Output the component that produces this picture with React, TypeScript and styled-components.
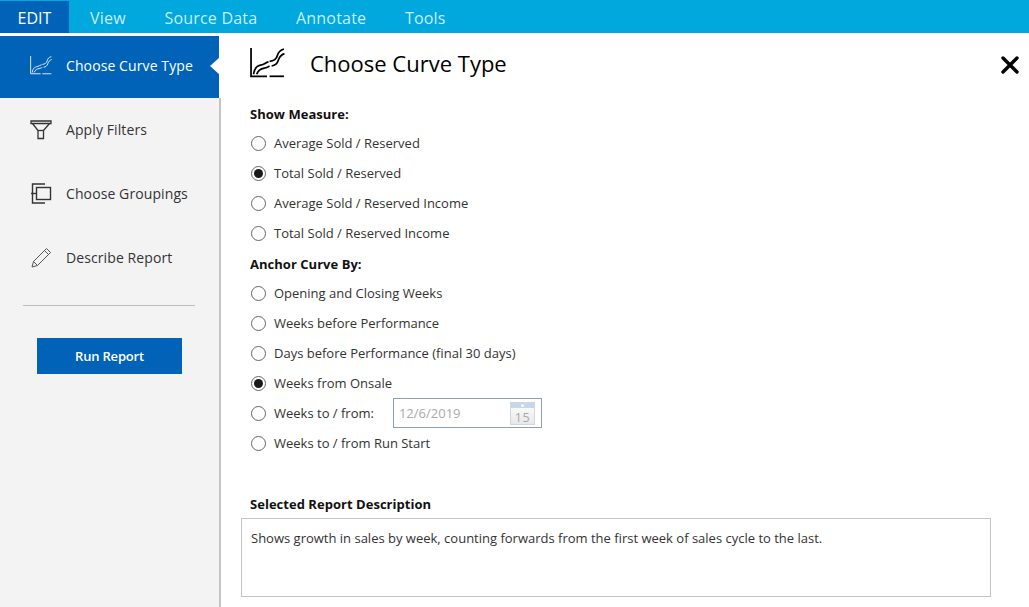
import React from "react";
import styled, { createGlobalStyle } from "styled-components";

const Global = createGlobalStyle`
  html, body { margin: 0; padding: 0; background: #fff; }
  body { font-family: "Open Sans", "Noto Sans", sans-serif; overflow: hidden; }
`;
const Page = styled.div`
  width: 1029px; height: 607px; display: flex; flex-direction: column; overflow: hidden; background: #fff;
`;
const TopBar = styled.nav`
  height: 32px; flex: none; display: flex; background: #00a8de; margin-bottom: 3px; padding-top: 1px; align-items: stretch;
`;
const EditTab = styled.div`
  width: 69px; display: flex; align-items: center; justify-content: center; font-size: 16px; letter-spacing: 0;
  color: #fff; background: #0063b8; padding-top: 1px; box-sizing: border-box;
`;
const TabList = styled.div`display: flex; align-items: center; gap: 38.7px; margin-left: 21px; padding-top: 2px;`;
const Tab = styled.div`font-size: 16px; letter-spacing: 0.2px; color: #c8eef9;`;
const Body = styled.div`flex: 1; display: flex; min-height: 0;`;
const Sidebar = styled.aside`
  width: 219px; flex: none; background: #f3f3f3; border-right: 2px solid #c4c4c4; display: flex; flex-direction: column;
`;
const NavItem = styled.div<{ $active?: boolean }>`
  height: 62px; margin-bottom: 2px; display: flex; align-items: center; padding: 0 0 3px 30px; gap: 14px; position: relative;
  font-size: 14px; letter-spacing: 0.1px; box-sizing: border-box;
  color: ${p => (p.$active ? "#fff" : "#333")};
  background: ${p => (p.$active ? "#0063b8" : "transparent")};
  ${p => p.$active && "width: 221px; border-right: 2px solid #fff;"}
`;
const Caret = styled.span`
  position: absolute; right: -1px; top: 21px; width: 0; height: 0;
  border-top: 9px solid transparent; border-bottom: 9px solid transparent; border-right: 10px solid #fff;
`;
const IconBox = styled.span`width: 22px; height: 22px; flex: none; display: flex; align-items: center; justify-content: center;`;
const Divider = styled.hr`margin: 13px 24px 0 23px; border: 0; border-top: 1px solid #bdbdbd; height: 0;`;
const RunButton = styled.button`
  margin: 32px 0 0 37px; width: 145px; height: 36px; border: 0; background: #0063b8; color: #fff;
  font: 600 13px "Open Sans", sans-serif; letter-spacing: -0.2px; padding: 0;
`;
const Main = styled.main`flex: 1; min-width: 0; padding: 12px 0 0 29px; position: relative; display: flex; flex-direction: column;`;
const Header = styled.header`display: flex; align-items: center; height: 30px; gap: 25px;`;
const Title = styled.h1`
  margin: 0; font-size: 22px; font-weight: 500; color: #000; letter-spacing: 0; line-height: 30px;
`;
const Close = styled.span`position: absolute; left: 779px; top: 19px; display: flex;`;
const Section = styled.div`
  font-size: 13px; font-weight: 700; color: #111; letter-spacing: 0.03px; line-height: 20px;
`;
const MeasureLabel = styled(Section)`margin-top: 26px;`;
const AnchorLabel = styled(Section)`margin-top: 6px;`;
const Options = styled.div`display: flex; flex-direction: column; margin-top: 4px;`;
const Option = styled.label`
  height: 30px; display: flex; align-items: center; gap: 8px; font-size: 13px; letter-spacing: 0; color: #333;
`;
const Radio = styled.span<{ $on?: boolean }>`
  width: 15px; height: 15px; flex: none; margin-left: 1px; border-radius: 50%; border: 1px solid #666; background: #fff; box-sizing: border-box;
  display: flex; align-items: center; justify-content: center;
  &::after { content: ""; width: 9px; height: 9px; border-radius: 50%; background: ${p => (p.$on ? "#1a1a1a" : "transparent")}; }
`;
const DateField = styled.span`
  margin-left: 11px; width: 149px; height: 30px; box-sizing: border-box; border: 1px solid #8a9fb0; display: flex; align-items: center;
  justify-content: space-between; padding: 0 6px 0 5px; color: #aaa; font-size: 13px; letter-spacing: 0;
`;
const DescLabel = styled(Section)`margin-top: 36px; margin-bottom: 4px;`;
const DescBox = styled.div`
  margin-left: -9px; width: 750px; height: 79px; box-sizing: border-box; border: 1px solid #c4c4c4; padding: 9px 9px;
  font-size: 13px; letter-spacing: 0; color: #333; line-height: 20px;
`;

const CurveIcon = ({ size, color, sw }: { size: number; color: string; sw: number }) => (
  <svg width={size} height={(size * 29) / 34} viewBox="0 0 34 29" fill="none" stroke={color} strokeWidth={sw}>
    <path d="M1 0v27.5H16.5" />
    <path d="M19 27.5h14" />
    <path d="M3.5 25.5C4.500 18 8 17 11 16.5s4-2.500 7-3" />
    <path d="M6.500 25.500C8 21 11 20 14 19.500s4-1.500 5-2" />
    <path d="M19 13c4-.5 6.500-1.500 7.500-5.500S29.500 2 33 1" />
    <path d="M21 17.500c3-.5 5.500-2 6.500-5.500S30.500 6.500 33.500 5.500" />
  </svg>
);
const FunnelIcon = () => (
  <svg width="22" height="20" viewBox="0 0 22 20" fill="none" stroke="#333" strokeWidth="1.300">
    <path d="M1 1h20v2.500H1z" />
    <path d="M2.500 3.500L8 10.500v8h5.500v-8L19.500 3.500" />
    <path d="M8 10.500h5.500" />
  </svg>
);
const GroupIcon = () => (
  <svg width="21" height="21" viewBox="0 0 21 21" fill="none" stroke="#333" strokeWidth="1.400">
    <path d="M14 1H1.500v19H14" />
    <path d="M0 10.500H5" />
    <rect x="5.500" y="4.500" width="14" height="12" />
  </svg>
);
const PencilIcon = () => (
  <svg width="21" height="21" viewBox="0 0 21 21" fill="none" stroke="#555" strokeWidth="1">
    <path d="M1 20l1.500-5.500L15.500 1.500l4 4L6.500 18.500z" />
    <path d="M2.500 14.500l4 4M13.500 3.500l4 4" />
  </svg>
);
const CalendarIcon = () => (
  <svg width="25" height="23" viewBox="0 0 25 23">
    <defs>
      <linearGradient id="calBody" x1="0" y1="0" x2="0" y2="1">
        <stop offset="0" stopColor="#fff" />
        <stop offset="1" stopColor="#e6e8e8" />
      </linearGradient>
    </defs>
    <rect x="0.500" y="0.500" width="24" height="22" fill="url(#calBody)" stroke="#d4d7d9" />
    <rect x="1" y="1" width="23" height="5" fill="#c3d8ea" />
    <circle cx="12.500" cy="3.500" r="1.600" fill="#fff" />
    <text x="12.500" y="19.500" textAnchor="middle" fontSize="12.500" letterSpacing="0.5" fill="#a9a9a9" fontFamily="Open Sans, sans-serif">15</text>
  </svg>
);

const measures = [
  ["Average Sold / Reserved", false],
  ["Total Sold / Reserved", true],
  ["Average Sold / Reserved Income", false],
  ["Total Sold / Reserved Income", false],
] as const;
const anchors = [
  ["Opening and Closing Weeks", false],
  ["Weeks before Performance", false],
  ["Days before Performance (final 30 days)", false],
  ["Weeks from Onsale", true],
] as const;

export default function App() {
  return (
    <Page>
      <Global />
      <TopBar>
        <EditTab>EDIT</EditTab>
        <TabList>
          <Tab>View</Tab>
          <Tab>Source Data</Tab>
          <Tab>Annotate</Tab>
          <Tab>Tools</Tab>
        </TabList>
      </TopBar>
      <Body>
        <Sidebar>
          <NavItem $active>
            <IconBox><CurveIcon size={22} color="#fff" sw={1.300} /></IconBox>
            Choose Curve Type
            <Caret />
          </NavItem>
          <NavItem><IconBox><FunnelIcon /></IconBox>Apply Filters</NavItem>
          <NavItem><IconBox><GroupIcon /></IconBox>Choose Groupings</NavItem>
          <NavItem><IconBox><PencilIcon /></IconBox>Describe Report</NavItem>
          <Divider />
          <RunButton>Run Report</RunButton>
        </Sidebar>
        <Main>
          <Header>
            <CurveIcon size={35} color="#000" sw={1.700} />
            <Title>Choose Curve Type</Title>
          </Header>
          <Close>
            <svg width="20" height="20" viewBox="0 0 20 20" stroke="#000" strokeWidth="3.400" strokeLinecap="round"><path d="M3 3l14 14M17 3L3 17" /></svg>
          </Close>
          <MeasureLabel>Show Measure:</MeasureLabel>
          <Options>
            {measures.map(([t, on]) => (
              <Option key={t}><Radio $on={on} />{t}</Option>
            ))}
          </Options>
          <AnchorLabel>Anchor Curve By:</AnchorLabel>
          <Options>
            {anchors.map(([t, on]) => (
              <Option key={t}><Radio $on={on} />{t}</Option>
            ))}
            <Option><Radio />Weeks to / from:<DateField>12/6/2019<CalendarIcon /></DateField></Option>
            <Option><Radio />Weeks to / from Run Start</Option>
          </Options>
          <DescLabel>Selected Report Description</DescLabel>
          <DescBox>Shows growth in sales by week, counting forwards from the first week of sales cycle to the last.</DescBox>
        </Main>
      </Body>
    </Page>
  );
}
